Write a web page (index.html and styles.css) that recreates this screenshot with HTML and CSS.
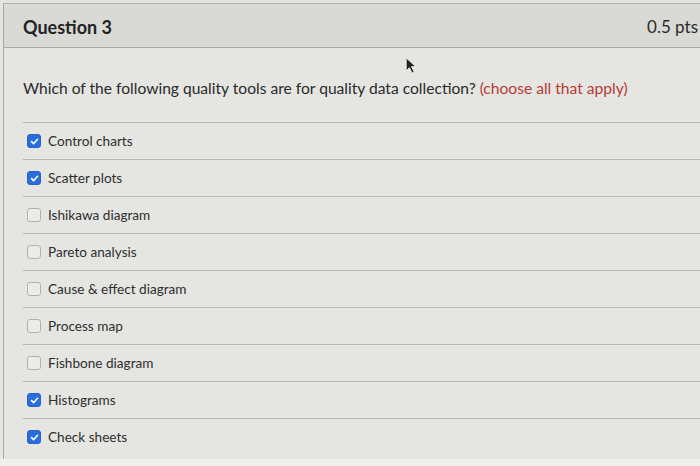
FILE: index.html
```html
<!DOCTYPE html>
<html>
<head>
<meta charset="utf-8">
<link rel="stylesheet" href="styles.css">
</head>
<body>
<div class="page">
  <div class="card">
    <div class="header">
      <span class="title">Question 3</span>
      <span class="pts">0.5 pts</span>
    </div>
    <div class="body">
      <p class="question">Which of the following quality tools are for quality data collection? <span class="hint">(choose all that apply)</span></p>
      <ul class="options">
        <li class="opt"><span class="box checked"><svg viewBox="0 0 12 12"><path d="M2.8 6.2 L5 8.4 L9.3 3.6" /></svg></span>Control charts</li>
        <li class="opt"><span class="box checked"><svg viewBox="0 0 12 12"><path d="M2.8 6.2 L5 8.4 L9.3 3.6" /></svg></span>Scatter plots</li>
        <li class="opt"><span class="box"></span>Ishikawa diagram</li>
        <li class="opt"><span class="box"></span>Pareto analysis</li>
        <li class="opt"><span class="box"></span>Cause &amp; effect diagram</li>
        <li class="opt"><span class="box"></span>Process map</li>
        <li class="opt"><span class="box"></span>Fishbone diagram</li>
        <li class="opt"><span class="box checked"><svg viewBox="0 0 12 12"><path d="M2.8 6.2 L5 8.4 L9.3 3.6" /></svg></span>Histograms</li>
        <li class="opt last"><span class="box checked"><svg viewBox="0 0 12 12"><path d="M2.8 6.2 L5 8.4 L9.3 3.6" /></svg></span>Check sheets</li>
      </ul>
    </div>
  </div>
  <div class="cursor"><svg viewBox="0 0 12 16" width="13" height="17"><path d="M1 1 L1 13 L4 10 L6.5 15 L8.5 14 L6 9 L10 9 Z" fill="#222" stroke="#eee" stroke-width="0.8"/></svg></div>
</div>
</body>
</html>
```
FILE: styles.css
```css
html, body {
  margin: 0;
  padding: 0;
}
body {
  background: #efefed;
  font-family: Lato, "Open Sans", sans-serif;
  color: #2e2e2e;
  width: 700px;
  height: 466px;
  overflow: hidden;
}
.page {
  position: relative;
  background: #e4e4e1;
  padding: 3px 0 0 3px;
  height: 455px;
}
.card {
  border-left: 1px solid #a9a9a6;
  border-top: 1px solid #b3b3b0;
  background: #e5e5e2;
  height: 455px;
}
.header {
  display: flex;
  justify-content: space-between;
  align-items: center;
  height: 43px;
  padding: 0 0 0 19px;
  background: #d9d9d6;
  border-bottom: 1px solid #a8a8a5;
}
.title {
  font-size: 18px;
  font-weight: bold;
  color: #232323;
  margin-top: 2px;
}
.pts {
  font-size: 17px;
  color: #2a2a2a;
  margin-right: 2px;
  margin-top: 2px;
}
.body {
  padding-left: 19px;
}
.question {
  margin: 0;
  padding-top: 30px;
  line-height: 20px;
  font-size: 15.6px;
  color: #2a2a2a;
  padding-bottom: 24px;
}
.hint {
  color: #b73c37;
}
.options {
  list-style: none;
  margin: 0;
  padding: 0;
  border-top: 1px solid #b9b9b6;
}
.opt {
  display: flex;
  align-items: center;
  height: 36px;
  border-bottom: 1px solid #b9b9b6;
  font-size: 13.6px;
  color: #2f2f2f;
}
.opt.last {
  border-bottom: none;
}
.box {
  width: 12px;
  height: 12px;
  margin: 0 7px 0 4px;
  border-radius: 3px;
  border: 1px solid #b1b1ae;
  background: #ebebe8;
  display: flex;
  align-items: center;
  justify-content: center;
  box-sizing: content-box;
}
.box.checked {
  background: #2a6ddc;
  border-color: #2a62c8;
}
.box svg {
  width: 11px;
  height: 11px;
}
.box svg path {
  fill: none;
  stroke: #fff;
  stroke-width: 1.8;
  stroke-linecap: round;
  stroke-linejoin: round;
}
.cursor {
  position: absolute;
  left: 405px;
  top: 57px;
}
```
